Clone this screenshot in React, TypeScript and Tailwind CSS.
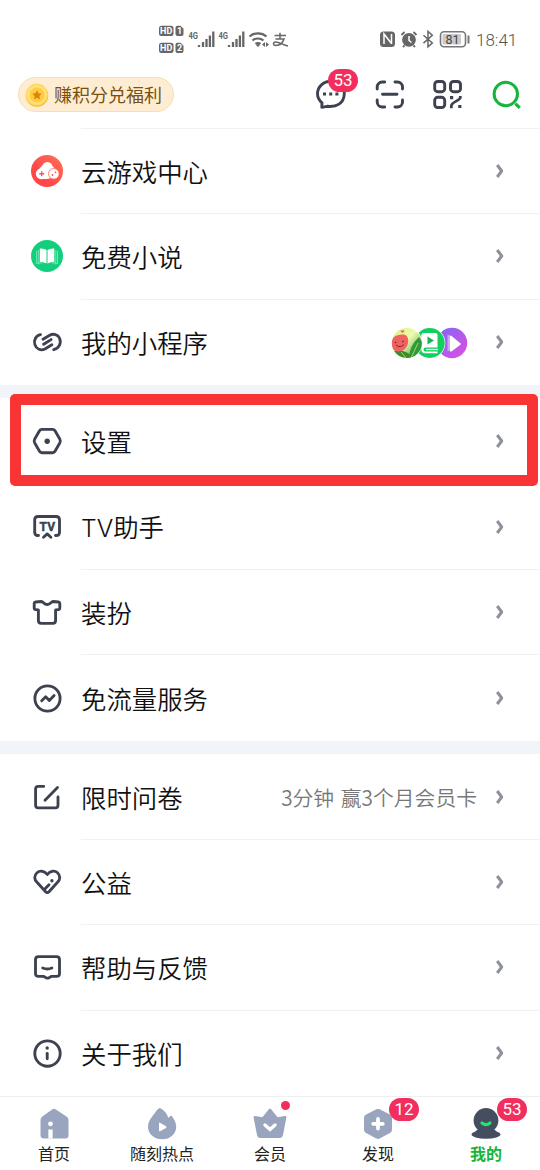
import type { ReactNode } from "react";

const INK = "#3d4250";

function StatusLeft() {
  return (
    <svg width="132" height="32" viewBox="158 23 132 32" fill="none" className="ml-[158px]" fontFamily="Roboto, sans-serif" fontWeight="700">
      {[25.7, 42.7].map((y, i) => (
        <g key={y}>
          <rect x="159" y={y} width="14.5" height="10.3" rx="2.5" fill="#666" />
          <text x="166.2" y={y + 8.3} fontSize="9" fill="#fff" textAnchor="middle">HD</text>
          <path d={`M177.5 ${y}h3l3 3v5.3a2 2 0 0 1-2 2h-4a2 2 0 0 1-2-2v-6.300a2 2 0 0 1 2-2z`} fill="#666" />
          <text x="179.500" y={y + 8.500} fontSize="9" fill="#fff" textAnchor="middle">{i + 1}</text>
        </g>
      ))}
      {[189, 219].map((x) => (
        <g key={x}>
          <text x={x - 0.5} y="38.500" fontSize="8.500" fill="#666" textLength="9.500" lengthAdjust="spacingAndGlyphs">4G</text>
          <path d={`M${x + 10} 47v-2M${x + 14} 47v-5M${x + 17.500} 47v-8M${x + 20.900} 47v-11.500M${x + 24.300} 47v-15.500`} stroke="#666" strokeWidth="2.300" />
        </g>
      ))}
      <path d="M249.500 36.500a13 13 0 0 1 17 0M252.500 40.500a8.500 8.500 0 0 1 11 0M255.500 44a4.500 4.500 0 0 1 5 0" stroke="#666" strokeWidth="2.200" />
      <circle cx="258" cy="45.300" r="1.400" fill="#666" />
      <path d="M265 42v5l-3-2.500zM266 42v5l3-2.500z" fill="#666" />
      <path d="M274.500 35.500h11.500M280 32.800v6M275.500 39h8.500c-1 3.500-4 6.500-8.500 6.500-2.500 0-2.800-3.500 0-3.500 4 0 7.500 3 12.500 4" stroke="#666" strokeWidth="1.500" />
    </svg>
  );
}

function StatusRight() {
  return (
    <svg width="92" height="24" viewBox="379 27 92 24" fill="none">
      <rect x="380" y="31.500" width="15" height="15.500" rx="3.500" fill="#666" />
      <path d="M384 44V34l7.500 9.500M391.500 44V34M384 34l2.500 3" stroke="#fff" strokeWidth="1.500" />
      <circle cx="409" cy="39.800" r="6.900" fill="#666" />
      <path d="M401.500 35l3-3M416.500 35l-3-3M404.500 45.500l-1.500 1.500M413.500 45.500l1.500 1.500" stroke="#666" strokeWidth="1.800" />
      <path d="M409 36v4.500l2.500 2" stroke="#fff" strokeWidth="1.500" />
      <path d="M423.500 35.200l8.800 7.800-4.300 3.800V31.500l4.300 3.700-8.800 7.900" stroke="#666" strokeWidth="1.500" />
      <rect x="440.500" y="31.800" width="25" height="15" rx="3.500" stroke="#777" strokeWidth="1.600" />
      <rect x="442.500" y="34" width="18.500" height="10.600" rx="1" fill="#cacaca" />
      <path d="M468.500 35.500v8" stroke="#777" strokeWidth="2" />
      <text x="452.500" y="43.700" fontFamily="Roboto" fontSize="12.500" fill="#444" textAnchor="middle">81</text>
    </svg>
  );
}

function Coin() {
  return (
    <svg width="24" height="24" viewBox="0 0 24 24">
      <circle cx="12" cy="12.400" r="11.300" fill="#f9bc2e" />
      <circle cx="11.700" cy="11.500" r="11" fill="#ffdc69" />
      <circle cx="12" cy="12" r="8.300" fill="#ffcc42" stroke="#ffeb9c" strokeWidth="1" />
      <path d="M12 7.300l1.500 3 3.300.5-2.400 2.300.6 3.300-3-1.600-3 1.600.6-3.300-2.400-2.300 3.300-.5z" fill="#db850d" />
    </svg>
  );
}

function HeaderIcons() {
  return (
    <svg width="214" height="40" viewBox="312 75 214 40" fill="none" stroke={INK} strokeWidth="2.900" strokeLinecap="round" strokeLinejoin="round">
      <path d="M336 81.300h-5c-7.500 0-13.500 5.500-13.500 12.500 0 4 1.800 6.700 4.500 9l-.2 4.500 5.200-1c9.500 1 17-2.600 17.300-12.500v-2" />
      <path d="M323 94h3M329.200 94h3M335.400 94h3" strokeWidth="3.200" strokeLinecap="butt" />
      <path d="M377.200 89v-2a5 5 0 0 1 5-5h2.500M395 82h2.500a5 5 0 0 1 5 5v2M402.500 100v2a5 5 0 0 1-5 5H395M384.700 107h-2.500a5 5 0 0 1-5-5v-2M382.500 94.300h14.500" />
      <rect x="434.700" y="81.500" width="10" height="10.200" rx="3" />
      <rect x="450.500" y="81.500" width="10" height="10.200" rx="3" />
      <rect x="434.700" y="97.300" width="10" height="10.200" rx="3" />
      <path d="M460.300 96v1.500c0 3-9 4.500-9 8.500v2.300" strokeWidth="2.800" strokeLinecap="butt" />
      <path d="M450 97.700h3.200M458.200 106.500h3.200" strokeWidth="3.200" strokeLinecap="butt" />
      <circle cx="505.800" cy="94" r="11.700" stroke="#15b53a" strokeWidth="3" />
      <path d="M515.400 103.600l4.400 4.200" stroke="#15b53a" strokeWidth="3.200" strokeLinecap="butt" />
    </svg>
  );
}

function Line({ children }: { children: ReactNode }) {
  return (
    <svg width="32" height="32" viewBox="0 0 32 32" fill="none" stroke={INK} strokeWidth="2.850" strokeLinecap="round" strokeLinejoin="round">
      {children}
    </svg>
  );
}

const icons: Record<string, ReactNode> = {
  game: (
    <svg width="32" height="32" viewBox="0 0 32 32">
      <defs>
        <linearGradient id="game" x1="1" y1="0" x2="0" y2="1">
          <stop stopColor="#ff7154" />
          <stop offset=".7" stopColor="#ff4649" />
        </linearGradient>
      </defs>
      <circle cx="16" cy="16" r="16" fill="url(#game)" />
      <g fill="#fff">
        <circle cx="16.300" cy="12.200" r="5.300" />
        <circle cx="10.200" cy="18.800" r="5.400" />
        <path d="M11.500 10l-5 6 5 8h4l6-1 5-7-5.300-5z" />
      </g>
      <circle cx="22.800" cy="18.800" r="5.300" fill="#fff" stroke="#ff655b" strokeWidth=".8" />
      <path d="M8.200 18.800h5M10.700 16.300v5" stroke="#ff5550" strokeWidth="1.400" />
      <circle cx="21.500" cy="20" r=".9" fill="#ff5550" />
      <circle cx="24.500" cy="17.300" r=".9" fill="#ff5550" />
    </svg>
  ),
  book: (
    <svg width="32" height="32" viewBox="0 0 32 32" fill="#fff">
      <circle cx="16" cy="16" r="16" fill="#13cf7b" />
      <path d="M8.800 8.500q4-.5 6.700 1.600V23.500Q12.500 21.500 8.800 22zM16.500 10.100q2.700-2.100 6.800-1.600V22q-3.800-.5-6.800 1.500z" />
      <path d="M7.300 10v12.700l4 .4M24.800 10v12.700l-4 .4M5.600 11v12.500l3 .3M26.500 11v12.500l-3 .3" stroke="#9af0c8" strokeWidth=".7" fill="none" />
    </svg>
  ),
  link: (
    <Line>
      <path d="M9.500 8.600C4.800 9.500 2.500 14 3.900 18.600s6 6.500 10 4.400l7-4.300" />
      <path d="M12 13.200l6.300-3.700c4.200-2.300 8.600-1.200 10.300 2.700 2 5-.6 10.300-5.900 11.500" />
      <path d="M12.600 18.200l7.500-4.600" />
    </Line>
  ),
  hex: (
    <Line>
      <path d="M11 4.300h10.500q1.700 0 2.500 1.400l4.900 8.600q.9 1.700 0 3.400L24 26.300q-.8 1.400-2.500 1.400H11q-1.700 0-2.500-1.400l-4.900-8.600q-.9-1.700 0-3.400l4.900-8.600q.8-1.400 2.500-1.400z" />
      <circle cx="16.200" cy="16.200" r="2.700" fill={INK} stroke="none" />
    </Line>
  ),
  tv: (
    <Line>
      <path d="M7.500 24.500h-.5q-3.300 0-3.300-3.300V8.800q0-3.300 3.300-3.300H25q3.500 0 3.500 3.300v12.400q0 3.300-3.300 3.300h-.7M12.500 26.200l3.700-3.300 3.700 3.300" />
      <text x="16.300" y="19.500" fontFamily="Roboto, sans-serif" fontSize="12" fontWeight="700" fill={INK} stroke={INK} strokeWidth=".5" textAnchor="middle">TV</text>
    </Line>
  ),
  shirt: (
    <Line>
      <path d="M10.500 5.500L4.500 6Q3.200 6.200 3.200 7.500v4.800q0 1.200 1.200 1.300l3 .3v10.600q0 2.800 2.800 2.800h11.600q2.800 0 2.800-2.800V13.900l3-.3q1.200-.1 1.200-1.300V7.500q0-1.300-1.300-1.500l-5.500-.5c-2 0-2 3-5.700 3s-3.800-3-5.800-3z" />
    </Line>
  ),
  flow: (
    <Line>
      <circle cx="16.500" cy="16.500" r="12.600" />
      <path d="M10.700 18.800l4-4 3.600 3.600 4.800-4.800" />
    </Line>
  ),
  survey: (
    <Line>
      <path d="M12.800 5.300H7.300q-2.700 0-2.700 2.700v16.200q0 2.700 2.700 2.700h17q2.700 0 2.700-2.700v-8.200M14 19.200L26.500 6.500" />
    </Line>
  ),
  heart: (
    <Line>
      <path d="M16.300 8.500c3-4 7.500-4.200 10.200-1.700 3 2.800 3 6.500 0 9.500L18 25.700q-1.700 1.900-3.400 0L6 16.300c-3-3-3-6.700 0-9.500 2.700-2.500 7.300-2.300 10.300 1.700z" />
      <path d="M14.300 22.500l3.700-3.700" />
      <circle cx="20.900" cy="14.800" r="1.700" fill={INK} stroke="none" />
    </Line>
  ),
  help: (
    <Line>
      <path d="M7.500 5.600h18q3 0 3 3v14.200q0 2.600-3 2.600h-5.300l-2.700 1.500q-1 .5-2 0l-2.700-1.500H7.500q-3 0-3-2.600V8.600q0-3 3-3z" />
      <path d="M11.700 17q4.600 2 9.200 0" />
    </Line>
  ),
  info: (
    <Line>
      <circle cx="16.500" cy="16.500" r="12.700" />
      <path d="M16.200 16.300v5.500" />
      <circle cx="16.200" cy="11" r="1.700" fill={INK} stroke="none" />
    </Line>
  ),
};

function MiniApps() {
  return (
    <svg width="78" height="32" viewBox="391 326 78 32" className="mr-[27px]">
      <defs>
        <linearGradient id="purple" x1="0" y1="0" x2="1" y2="1">
          <stop stopColor="#7b68f6" />
          <stop offset="1" stopColor="#e44ce0" />
        </linearGradient>
        <linearGradient id="leaf" x1="0" y1="0" x2="1" y2="1">
          <stop stopColor="#d9ef7b" />
          <stop offset=".45" stopColor="#effaae" />
          <stop offset="1" stopColor="#238d34" />
        </linearGradient>
        <clipPath id="melon"><circle cx="406.800" cy="342" r="15" /></clipPath>
      </defs>
      <circle cx="452" cy="342" r="15.200" fill="url(#purple)" />
      <path d="M447.500 333.500v17l4-2v-13z" fill="#cda8fa" />
      <path d="M450 335.500q0-1.500 1.300-.8l9 7.500q1 1-.1 1.900l-8.800 6.300q-1.400.8-1.400-.8z" fill="#fff" />
      <circle cx="429.700" cy="342" r="15.600" fill="#fff" />
      <circle cx="429.700" cy="342" r="15" fill="#12cf60" />
      <path d="M425 332h10.500q2 0 2 2v12.500h-12q-2 0-2 2t2 2h12v1.700h-12.500q-3.700 0-3.700-3.700V334q0-2 2.200-2z" fill="#fff" />
      <path d="M427.500 335.500l6.500 4-6.500 4z" fill="#12b955" />
      <path d="M426 348.500h12" stroke="#fff" strokeWidth="1.300" />
      <circle cx="406.800" cy="342" r="15.600" fill="#fff" />
      <g clipPath="url(#melon)">
        <rect x="391" y="326" width="32" height="32" fill="url(#leaf)" />
        <path d="M409 358q0-13 10-22l6 10-3 13z" fill="#2f9a3b" />
        <path d="M393 350q12-3 22 8h-18z" fill="#3c8c2d" />
        <path d="M411 357l7-15M407 358l-6-7" stroke="#a4db52" />
        <path d="M402 333.500c5-.5 7 3.500 6 8.500s-5 9-10 8.500-8-4.500-6.500-10 5.500-6.600 10.500-7z" fill="#ef625f" />
        <path d="M396 344q4 3.500 8-.5" stroke="#842d35" fill="none" />
        <circle cx="395.500" cy="341.500" r=".8" fill="#64252d" />
        <circle cx="403" cy="340.500" r=".8" fill="#64252d" />
        <path d="M402.500 332l-2-2q1-1.500 2 0 1-1.500 2 0z" fill="#ef574d" />
      </g>
    </svg>
  );
}

function Chevron() {
  return (
    <svg width="8" height="14" viewBox="0 0 8 14" fill="none" stroke="#8d919b" strokeWidth="3" className="mr-[36px] -mt-px">
      <path d="M1.200 1l4.500 6-4.500 6" strokeLinejoin="round" />
    </svg>
  );
}

type RowData = { icon: string; label: string; latin?: string; height: string; extra?: "apps" | "survey"; plain?: boolean };

const groups: RowData[][] = [
  [
    { icon: "game", label: "云游戏中心", height: "h-[85px]" },
    { icon: "book", label: "免费小说", height: "h-[86px]" },
    { icon: "link", label: "我的小程序", height: "h-[86px]", extra: "apps" },
  ],
  [
    { icon: "hex", label: "设置", height: "h-[86px]", plain: true },
    { icon: "tv", latin: "TV", label: "助手", height: "h-[85px]" },
    { icon: "shirt", label: "装扮", height: "h-[85px]" },
    { icon: "flow", label: "免流量服务", height: "h-[87px]" },
  ],
  [
    { icon: "survey", label: "限时问卷", height: "h-[85px]", extra: "survey", plain: true },
    { icon: "heart", label: "公益", height: "h-[85px]" },
    { icon: "help", label: "帮助与反馈", height: "h-[86px]" },
    { icon: "info", label: "关于我们", height: "h-[86px]" },
  ],
];

function Row({ row }: { row: RowData }) {
  return (
    <div className={`flex ${row.height}`}>
      <div className="flex w-[81px] items-center pl-[31px]">{icons[row.icon]}</div>
      <div className={`flex flex-1 items-center border-t ${row.plain ? "border-transparent" : "border-[#f0f1f3]"}`}>
        <span className="flex-1 pt-px text-[25.4px] font-[350] leading-none text-[#111]">
          {row.latin && <span className="font-['Inter'] text-[24.6px] font-light">{row.latin}</span>}
          {row.label}
        </span>
        {row.extra === "apps" && <MiniApps />}
        {row.extra === "survey" && <span className="mr-[19px] text-[20.8px] font-[350] leading-none text-[#777] [word-spacing:2px]">3分钟 赢3个月会员卡</span>}
        <Chevron />
      </div>
    </div>
  );
}

function Badge({ children, place }: { children: ReactNode; place: string }) {
  return (
    <span className={`absolute flex h-[23px] w-[30px] items-center justify-center rounded-full bg-[#f22e5e] font-[Roboto] text-[17px] leading-none text-white ${place}`}>
      {children}
    </span>
  );
}

const tabs: { label: string; icon: ReactNode; mark?: ReactNode; active?: boolean }[] = [
  {
    label: "首页",
    icon: (
      <>
        <path d="M14.500 1.300q1.500-.9 3 0l11.300 7.500q1.700 1.200 1.700 3.200v15.500q0 3-3 3h-21q-4 0-4-3V12q0-2 1.500-3.200z" fill="#99a5be" />
        <path d="M12.500 21.500v9" stroke="#fff" strokeWidth="4.300" />
        <circle cx="12.500" cy="15.800" r="2.400" fill="#fff" />
      </>
    ),
  },
  {
    label: "随刻热点",
    icon: (
      <>
        <path d="M12.700.4q1-.8 2.300 0c4.500 3 6.500 6 7.300 9.600l1.700-1.800q1-1 2 0c2.700 3.500 4.200 7 4.200 10.500C30.200 26 24 31.300 16.200 31.300S2 26 2 18.700C2 12 8 7 10.500 2.500z" fill="#99a5be" />
        <path d="M13 15.200q0-1 1-.5l6 3.600q1 .8 0 1.600l-6 3.300q-1 .5-1-.5z" fill="#fff" />
      </>
    ),
  },
  {
    label: "会员",
    mark: <span className="absolute left-[65px] top-[4px] h-[9px] w-[9px] rounded-full bg-[#ee2f5b]" />,
    icon: (
      <>
        <path d="M15 1q1-.8 2 0l6 7.500q1 1 2 .5l6-1q1.700-.2 1.400 1.500L29 27q-.5 3-3.500 3h-19Q3.500 30 3 27L-.4 9.500Q-.700 7.800 1 8l6 1q1 .500 2-.500z" fill="#99a5be" />
        <path d="M11 17l5 4.500 5-4.500" stroke="#fff" strokeWidth="3.400" strokeLinecap="round" fill="none" />
      </>
    ),
  },
  {
    label: "发现",
    mark: <Badge place="left-[65px] top-px">12</Badge>,
    icon: (
      <>
        <path d="M14.300 1.300q1.700-.8 3.400 0l10.600 5.500q1.700 1 1.700 3v12q0 2-1.700 3l-10.600 5.700q-1.700.8-3.400 0L3.700 24.800q-1.700-1-1.700-3v-12q0-2 1.700-3z" fill="#99a5be" />
        <path d="M11.200 15.800h9.600M16 11v9.600" stroke="#fff" strokeWidth="3.800" strokeLinecap="round" />
      </>
    ),
  },
  {
    label: "我的",
    active: true,
    mark: <Badge place="left-[65px] top-px">53</Badge>,
    icon: (
      <>
        <ellipse cx="16" cy="26.500" rx="14.500" ry="4.200" fill="#454d60" />
        <path d="M7 22h18l4 4H3z" fill="#454d60" />
        <circle cx="16" cy="12.400" r="12.400" fill="#454d60" />
        <path d="M12 15q4 3.200 8 0" stroke="#25e46b" strokeWidth="3.200" strokeLinecap="round" fill="none" />
      </>
    ),
  },
];

export default function App() {
  return (
    <div className="relative flex h-[1170px] w-[540px] flex-col overflow-hidden bg-white font-['Noto_Sans_CJK_SC',sans-serif]">
      <div className="flex h-[73px] items-center pt-[5px]">
        <StatusLeft />
        <div className="ml-[89px] flex items-center">
          <StatusRight />
          <span className="ml-[5px] mt-[2px] font-[Roboto] text-[17px] font-light leading-none text-[#555]">18:41</span>
        </div>
      </div>
      <header className="flex h-[55px] items-start justify-between pl-[18px] pr-[14px]">
        <div className="mt-[4px] flex h-[35px] w-[156px] items-center gap-[5px] rounded-full border border-[#f4dfba] bg-[#ffedd3] pl-[6px]">
          <Coin />
          <span className="-mt-px whitespace-nowrap text-[18px] leading-none text-[#79500f]">赚积分兑福利</span>
        </div>
        <div className="relative mt-[2px]">
          <HeaderIcons />
          <Badge place="left-[16px] top-[-6px]">53</Badge>
        </div>
      </header>
      <main className="flex flex-col">
        {groups.map((rows, i) => (
          <section key={i}>
            {i > 0 && <div className="h-[13px] bg-[#f1f4f9]" />}
            {rows.map((row) => (
              <Row key={row.label} row={row} />
            ))}
          </section>
        ))}
      </main>
      <nav className="grid h-[74px] grid-cols-5 border-t border-[#eeeff1]">
        {tabs.map((tab) => (
          <div key={tab.label} className="relative flex flex-col items-center pt-[11px]">
            <svg width="34" height="32" viewBox="-1 0 34 32">{tab.icon}</svg>
            <span className={`mt-[5px] text-[16px] leading-none ${tab.active ? "font-bold text-[#15b53a]" : "text-[#222]"}`}>{tab.label}</span>
            {tab.mark}
          </div>
        ))}
      </nav>
      <div className="pointer-events-none absolute left-[10px] top-[394px] h-[92px] w-[528px] rounded-[5px] border-[11px] border-[#f83434]" />
    </div>
  );
}
